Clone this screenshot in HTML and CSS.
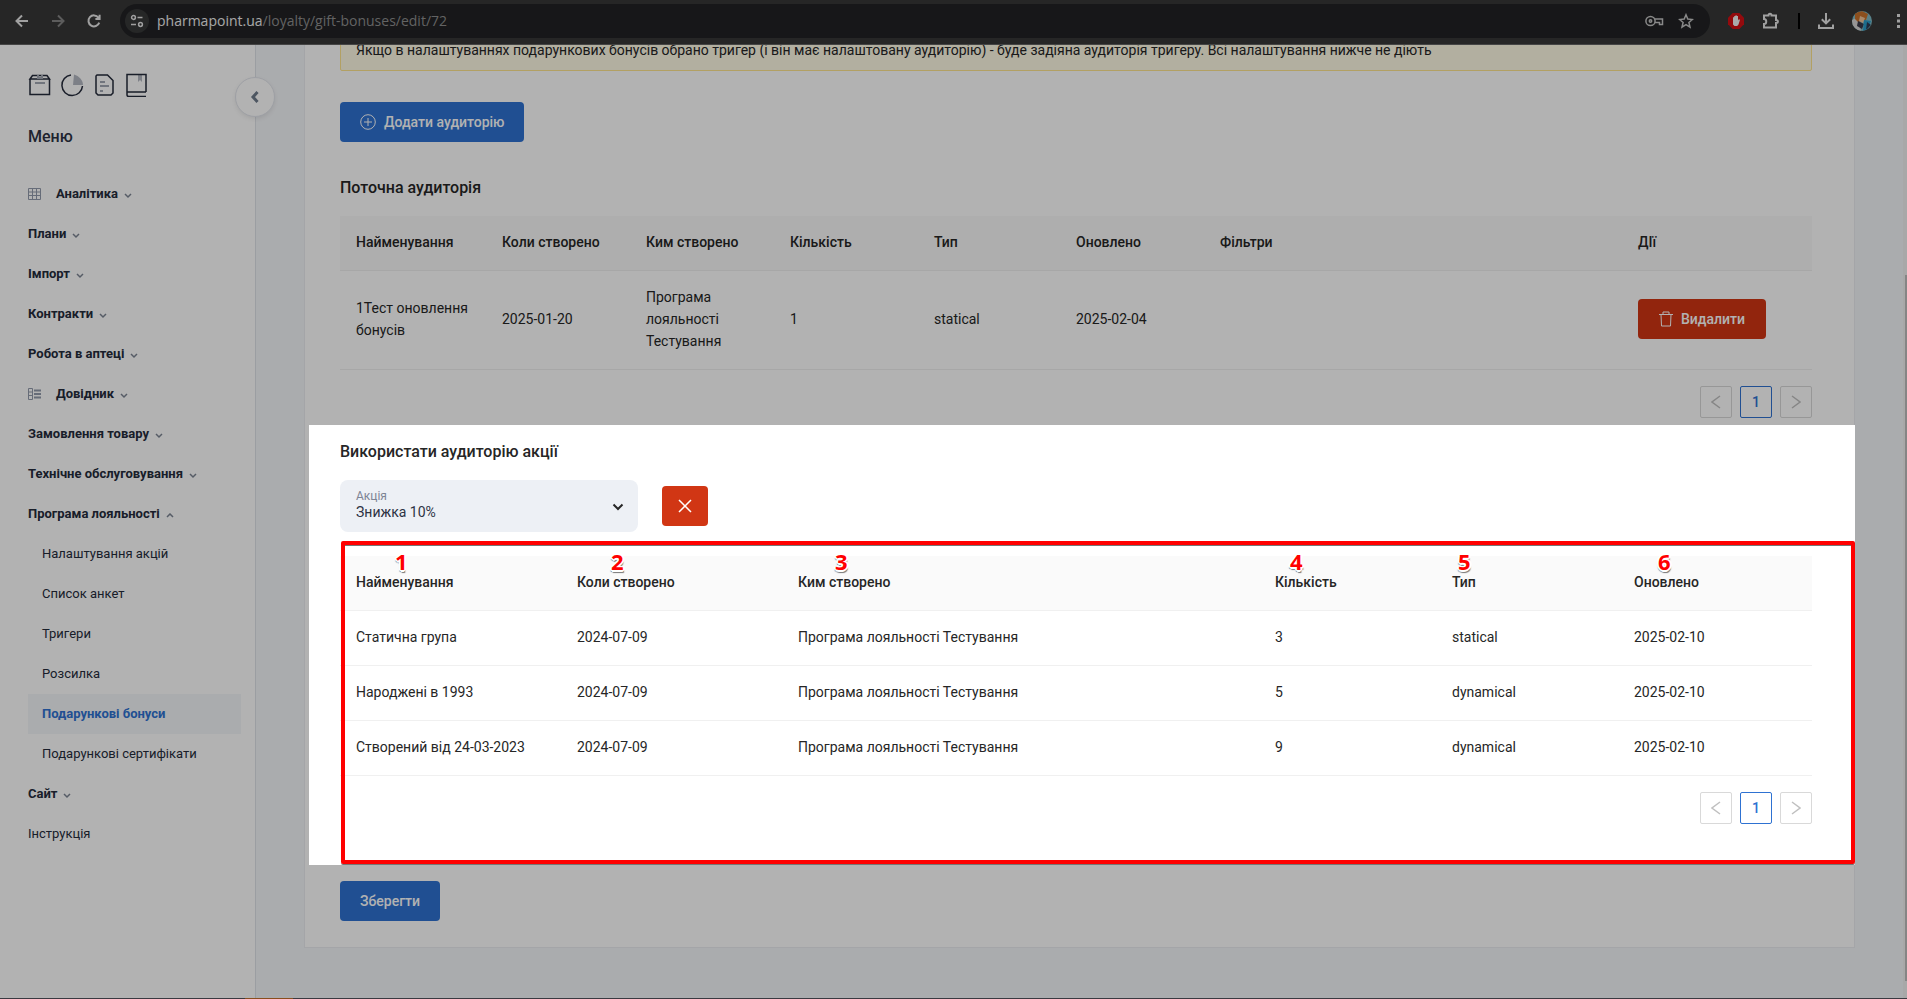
FILE: index.html
```html
<!DOCTYPE html>
<html lang="uk">
<head>
    <meta charset="UTF-8">
    <meta name="viewport" content="width=device-width, initial-scale=1.0">
    <title>Подарункові бонуси</title>
    <link rel="stylesheet" href="styles.css">
</head>
<body>
    <header class="browser-bar">
        <button class="bar-btn" aria-label="Назад">
            <svg width="16" height="16" viewBox="0 0 16 16"><path d="M14 8H3M8 2.5 2.5 8 8 13.5"/></svg>
        </button>
        <button class="bar-btn muted" aria-label="Вперед">
            <svg width="16" height="16" viewBox="0 0 16 16"><path d="M2 8h11M8 2.5 13.5 8 8 13.5"/></svg>
        </button>
        <button class="bar-btn" aria-label="Оновити">
            <svg width="16" height="16" viewBox="0 0 16 16"><path d="M13.2 9.6A5.5 5.5 0 1 1 12.4 4.6L13.6 6M13.6 1.8V6H9.4"/></svg>
        </button>
        <div class="address">
            <span class="site-info">
                <svg width="16" height="16" viewBox="0 0 16 16"><circle cx="4.5" cy="4.5" r="1.9"/><path d="M8.5 4.5h5M2 11.5h5"/><circle cx="11.5" cy="11.5" r="1.9"/></svg>
            </span>
            <span class="url"><b>pharmapoint.ua</b>/loyalty/gift-bonuses/edit/72</span>
            <button class="bar-btn" aria-label="Паролі">
                <svg width="20" height="16" viewBox="0 0 20 16"><circle cx="6.5" cy="8" r="4.6"/><circle cx="6.5" cy="8" r="1.2"/><path d="M11 6h7.5v5.5h-3V9.5H11"/></svg>
            </button>
            <button class="bar-btn" aria-label="Закладка">
                <svg width="16" height="16" viewBox="0 0 16 16"><path d="m8 1.8 1.8 4.3 4.6.4-3.5 3 1.1 4.6L8 11.6l-4 2.5 1.1-4.6-3.5-3 4.6-.4z"/></svg>
            </button>
        </div>
        <div class="extensions">
            <button class="bar-btn" aria-label="AdBlock">
                <svg width="16" height="16" viewBox="0 0 16 16"><path class="ad-red" d="M4.7 0h6.6L16 4.7v6.6L11.3 16H4.7L0 11.3V4.7z"/><path class="ad-hand" d="M5 8V4.200h1.200V3h1.300v-.700h1.200V3H10v4.500l.8-1.200 1.200.4-1.500 4.800L9.200 13H6.500L5 11.500z"/></svg>
            </button>
            <button class="bar-btn" aria-label="Розширення">
                <svg width="18" height="18" viewBox="0 0 18 18"><path d="M2 3.500h4.500C6.500 1 9.500 1 9.500 3.500H14V8c2.500 0 2.500 3 0 3v4.500H2V12c3 0 3-5 0-5z"/></svg>
            </button>
            <span class="bar-divider"></span>
            <button class="bar-btn" aria-label="Завантаження">
                <svg width="16" height="16" viewBox="0 0 16 16"><path d="M8 0v10M3.800 6.200 8 10.400l4.200-4.200M1 11.500V15h14v-3.500"/></svg>
            </button>
            <button class="bar-btn" aria-label="Профіль">
                <svg class="avatar" width="20" height="20" viewBox="0 0 20 20"><path fill="#7fb9c4" d="M0 0h20v20H0z"/><path fill="#d9d6d4" d="M0 9 6 6l3 14H0z"/><path fill="#c9722c" d="M3 2 10 0l6 3-2 6-8 2-3-3z"/><path fill="#f0c49a" d="m8 5 5 2-2 5-4-2z"/><path fill="#3c3a48" d="m6 10 6 3-2 5-5-3z"/><path fill="#2a9dc9" d="m12 9 7 1-3 8-5 2z"/><path fill="#2b3a52" d="m15 11 4 3-5 5z"/></svg>
            </button>
            <button class="bar-btn" aria-label="Меню браузера">
                <svg width="16" height="16" viewBox="0 0 16 16"><path class="dots" d="M7 1h3v3H7zM7 6.500h3v3H7zM7 12h3v3H7z"/></svg>
            </button>
        </div>
    </header>

    <div class="layout">
        <aside class="sidebar">
            <button class="collapse" aria-label="Згорнути меню">
                <svg width="12" height="12" viewBox="0 0 12 12"><path d="M8.500 1 4 6l4.500 5"/></svg>
            </button>
            <div class="shortcuts">
                <svg width="24" height="24" viewBox="0 0 24 24"><path d="M2 6v15.500h19.500V6M2 6l2.500-3.500H19L21.500 6z"/><path class="soft" d="M7 10h10M10 2v3h4V2"/></svg>
                <svg width="24" height="24" viewBox="0 0 24 24"><path class="soft-fill" d="M14 1.500 13 12h10C23 7 19 3 14 1.500z"/><path d="M11 2a10.300 10.300 0 1 0 11.500 11"/></svg>
                <svg width="24" height="24" viewBox="0 0 24 24"><path d="M5 2h10.500L21 7.500V20l-2 2H6l-2-2V3z"/><path class="soft" d="M8 9h5M8 13h9M8 18h3"/></svg>
                <svg width="24" height="24" viewBox="0 0 24 24"><path class="soft-fill" d="M14 2h4v7l-2-2-2 2z"/><path d="M22 19V1.500H3V22c0 1 1 1.500 2 1.500h17M3 19h19"/></svg>
            </div>
            <h2 class="menu-title">Меню</h2>
            <nav class="menu">
                <a class="menu-item" href="#">
                    <svg class="item-icon" width="13" height="12" viewBox="0 0 13 12"><path d="M.5.500h12v11H.500zM.500 4h12M.500 7.500h12M4.500.500v11M8.500.500v11"/></svg>
                    Аналітика <svg class="caret" width="8" height="6" viewBox="0 0 8 6"><path d="m1 1 3 3 3-3"/></svg>
                </a>
                <a class="menu-item" href="#">Плани <svg class="caret" width="8" height="6" viewBox="0 0 8 6"><path d="m1 1 3 3 3-3"/></svg></a>
                <a class="menu-item" href="#">Імпорт <svg class="caret" width="8" height="6" viewBox="0 0 8 6"><path d="m1 1 3 3 3-3"/></svg></a>
                <a class="menu-item" href="#">Контракти <svg class="caret" width="8" height="6" viewBox="0 0 8 6"><path d="m1 1 3 3 3-3"/></svg></a>
                <a class="menu-item" href="#">Робота в аптеці <svg class="caret" width="8" height="6" viewBox="0 0 8 6"><path d="m1 1 3 3 3-3"/></svg></a>
                <a class="menu-item" href="#">
                    <svg class="item-icon" width="13" height="12" viewBox="0 0 13 12"><path d="M.5.500h4v11h-4zM.500 4h4M.500 7.500h4"/><path stroke-width="2" d="M6 2.500h7M6 6h7M6 9.500h7"/></svg>
                    Довідник <svg class="caret" width="8" height="6" viewBox="0 0 8 6"><path d="m1 1 3 3 3-3"/></svg>
                </a>
                <a class="menu-item" href="#">Замовлення товару <svg class="caret" width="8" height="6" viewBox="0 0 8 6"><path d="m1 1 3 3 3-3"/></svg></a>
                <a class="menu-item" href="#">Технічне обслуговування <svg class="caret" width="8" height="6" viewBox="0 0 8 6"><path d="m1 1 3 3 3-3"/></svg></a>
                <a class="menu-item" href="#">Програма лояльності <svg class="caret" width="8" height="6" viewBox="0 0 8 6"><path d="m1 4 3-3 3 3"/></svg></a>
                <a class="menu-item sub" href="#">Налаштування акцій</a>
                <a class="menu-item sub" href="#">Список анкет</a>
                <a class="menu-item sub" href="#">Тригери</a>
                <a class="menu-item sub" href="#">Розсилка</a>
                <a class="menu-item sub active" href="#">Подарункові бонуси</a>
                <a class="menu-item sub" href="#">Подарункові сертифікати</a>
                <a class="menu-item" href="#">Сайт <svg class="caret" width="8" height="6" viewBox="0 0 8 6"><path d="m1 1 3 3 3-3"/></svg></a>
                <a class="menu-item plain" href="#">Інструкція</a>
            </nav>
        </aside>

        <main class="content">
            <div class="card">
                <div class="alert">Якщо в налаштуваннях подарункових бонусів обрано тригер (і він має налаштовану аудиторію) - буде задіяна аудиторія тригеру. Всі налаштування нижче не діють</div>

                <button class="btn btn-add">
                    <svg width="16" height="16" viewBox="0 0 16 16"><circle cx="8" cy="8" r="7.300"/><path d="M8 4v8M4 8h8"/></svg>
                    Додати аудиторію
                </button>

                <h3 class="section-title">Поточна аудиторія</h3>
                <table class="table">
                    <colgroup>
                        <col class="w-146"><col class="w-144"><col class="w-144"><col class="w-144"><col class="w-142"><col class="w-144"><col class="w-418"><col class="w-190">
                    </colgroup>
                    <thead>
                        <tr>
                            <th>Найменування</th>
                            <th>Коли створено</th>
                            <th>Ким створено</th>
                            <th>Кількість</th>
                            <th>Тип</th>
                            <th>Оновлено</th>
                            <th>Фільтри</th>
                            <th>ДІї</th>
                        </tr>
                    </thead>
                    <tbody>
                        <tr>
                            <td>1Тест оновлення бонусів</td>
                            <td>2025-01-20</td>
                            <td>Програма лояльності Тестування</td>
                            <td>1</td>
                            <td>statical</td>
                            <td>2025-02-04</td>
                            <td></td>
                            <td>
                                <button class="btn btn-danger">
                                    <svg width="14" height="16" viewBox="0 0 14 16"><path d="M0 3.500h14M4 3.500V1h6v2.500M2 3.500 2.500 15h9L12 3.500"/></svg>
                                    Видалити
                                </button>
                            </td>
                        </tr>
                    </tbody>
                </table>
                <div class="pagination">
                    <button class="page" aria-label="Попередня"><svg width="10" height="14" viewBox="0 0 10 14"><path d="M9 1 1 7l8 6"/></svg></button>
                    <button class="page current">1</button>
                    <button class="page" aria-label="Наступна"><svg width="10" height="14" viewBox="0 0 10 14"><path d="m1 1 8 6-8 6"/></svg></button>
                </div>

                <section class="spotlight">
                    <h3 class="section-title">Використати аудиторію акції</h3>
                    <div class="promo-row">
                        <div class="field">
                            <label for="promo">Акція</label>
                            <select id="promo">
                                <option>Знижка 10%</option>
                            </select>
                            <svg class="field-arrow" width="12" height="8" viewBox="0 0 12 8"><path d="m1.500 1.500 4.500 4.500 4.500-4.500"/></svg>
                        </div>
                        <button class="btn btn-clear" aria-label="Очистити">
                            <svg width="14" height="14" viewBox="0 0 14 14"><path d="m1 1 12 12M13 1 1 13"/></svg>
                        </button>
                    </div>
                    <table class="table">
                        <colgroup>
                            <col class="w-221"><col class="w-221"><col class="w-477"><col class="w-177"><col class="w-182"><col class="w-194">
                        </colgroup>
                        <thead>
                            <tr>
                                <th>Найменування</th>
                                <th>Коли створено</th>
                                <th>Ким створено</th>
                                <th>Кількість</th>
                                <th>Тип</th>
                                <th>Оновлено</th>
                            </tr>
                        </thead>
                        <tbody>
                            <tr>
                                <td>Статична група</td>
                                <td>2024-07-09</td>
                                <td>Програма лояльності Тестування</td>
                                <td>3</td>
                                <td>statical</td>
                                <td>2025-02-10</td>
                            </tr>
                            <tr>
                                <td>Народжені в 1993</td>
                                <td>2024-07-09</td>
                                <td>Програма лояльності Тестування</td>
                                <td>5</td>
                                <td>dynamical</td>
                                <td>2025-02-10</td>
                            </tr>
                            <tr>
                                <td>Створений від 24-03-2023</td>
                                <td>2024-07-09</td>
                                <td>Програма лояльності Тестування</td>
                                <td>9</td>
                                <td>dynamical</td>
                                <td>2025-02-10</td>
                            </tr>
                        </tbody>
                    </table>
                    <div class="pagination">
                        <button class="page" aria-label="Попередня"><svg width="10" height="14" viewBox="0 0 10 14"><path d="M9 1 1 7l8 6"/></svg></button>
                        <button class="page current">1</button>
                        <button class="page" aria-label="Наступна"><svg width="10" height="14" viewBox="0 0 10 14"><path d="m1 1 8 6-8 6"/></svg></button>
                    </div>
                    <!-- red frame with numbered pins -->
                    <div class="frame">
                        <span class="pin pin-1">1</span>
                        <span class="pin pin-2">2</span>
                        <span class="pin pin-3">3</span>
                        <span class="pin pin-4">4</span>
                        <span class="pin pin-5">5</span>
                        <span class="pin pin-6">6</span>
                    </div>
                </section>

                <button class="btn btn-save">Зберегти</button>
            </div>
        </main>
        <div class="scrollbar"><div class="thumb"></div></div>
    </div>
    <footer class="taskbar"><span class="task"></span></footer>
</body>
</html>
```

FILE: styles.css
```css
:root {
    --blue: #2e72d2;
    --red: #d13614;
    --text: #262626;
    --menu-text: #252b3b;
    --page-bg: #f4f6f9;
    --line: #f0f0f0;
}

* {
    box-sizing: border-box;
    margin: 0;
    padding: 0;
}

body {
    display: flex;
    flex-direction: column;
    height: 100vh;
    overflow: hidden;
    background-color: var(--page-bg);
    color: var(--text);
    font-family: Roboto, "Liberation Sans", sans-serif;
    font-size: 14px;
    line-height: 22px;
}

button,
select {
    font-family: inherit;
    font-size: inherit;
    border: none;
    background: none;
    cursor: pointer;
}

svg {
    flex: none;
    fill: none;
    stroke: currentColor;
}

/* Browser bar */
.browser-bar {
    position: relative;
    z-index: 2;
    flex: none;
    display: flex;
    align-items: center;
    height: 45px;
    padding: 0 1px 2px 14px;
    background-color: #373737;
    border-bottom: 1px solid #636363;
    color: #e6e6e6;
}

.bar-btn {
    display: flex;
    color: inherit;
    stroke-width: 2;
}

.browser-bar > .bar-btn {
    margin-right: 20px;
}

.browser-bar > .muted + .bar-btn {
    margin-right: 18px;
}

.bar-btn.muted {
    color: #858585;
}

.address {
    flex: 1;
    display: flex;
    align-items: center;
    gap: 14px;
    height: 34px;
    margin-right: 18px;
    padding: 0 16px 0 5px;
    background-color: #212224;
    border-radius: 17px;
    color: #c4c4c4;
}

.address .bar-btn {
    stroke-width: 1.5;
}

.site-info {
    display: flex;
    align-items: center;
    justify-content: center;
    width: 24px;
    height: 24px;
    margin-right: -6px;
    border-radius: 50%;
    background-color: #373839;
    color: #e6e6e6;
    stroke-width: 1.5;
}

.url {
    flex: 1;
    font-family: "Open Sans", "Noto Sans", sans-serif;
    font-size: 14px;
    color: #8e8e8e;
}

.url b {
    font-weight: 400;
    color: #f0f0f0;
}

.extensions {
    display: flex;
    align-items: center;
    gap: 18px;
}

.ad-red {
    fill: #d40f14;
    stroke: none;
}

.ad-hand {
    fill: #f4f4f4;
    stroke: none;
}

.bar-divider {
    width: 2px;
    height: 16px;
    background-color: #000;
}

.avatar {
    border-radius: 50%;
    stroke: none;
}

.dots {
    fill: currentColor;
    stroke: none;
}

/* Layout */
.layout {
    flex: 1;
    display: flex;
    min-height: 0;
}

.sidebar {
    position: relative;
    flex: none;
    width: 256px;
    padding: 28px 14px 0 28px;
    background-color: #fff;
    border-right: 1px solid #dfe2e8;
}

.collapse {
    position: absolute;
    top: 32px;
    right: -20px;
    display: flex;
    align-items: center;
    justify-content: center;
    width: 40px;
    height: 40px;
    border: 1px solid #e2e5ec;
    border-radius: 50%;
    background-color: #fff;
    box-shadow: 0 2px 4px rgba(0, 0, 0, 0.08);
    color: #6f7b8c;
    stroke-width: 3;
}

.shortcuts {
    display: flex;
    gap: 8px;
    color: #252b3b;
    stroke-width: 1.5;
}

.soft {
    stroke: #a3a8b3;
    stroke-width: 2;
}

.soft-fill {
    fill: #b4b8c2;
    stroke: none;
}

.menu-title {
    margin: 28px 0 25px;
    font-size: 16px;
    font-weight: 500;
    line-height: 24px;
    color: #2d3344;
}

.menu-item {
    display: flex;
    align-items: center;
    height: 40px;
    font-size: 13px;
    font-weight: 700;
    color: var(--menu-text);
    text-decoration: none;
}

.item-icon {
    margin-right: 15px;
    color: #939bac;
}

.caret {
    margin: 4px 0 0 6px;
    color: #7c8493;
    stroke-width: 1.5;
}

.menu-item.sub {
    padding-left: 14px;
    font-weight: 400;
}

.menu-item.plain {
    font-weight: 400;
}

.menu-item.active {
    background-color: var(--page-bg);
    color: var(--blue);
    font-weight: 700;
}

.content {
    flex: 1;
    padding: 0 48px 51px;
}

/* the page is scrolled, so the card runs on under the browser bar */
.card {
    margin-top: -45px;
    padding: 31px 42px 26px 35px;
    background-color: #fff;
    border: 1px solid #ebedf1;
    border-top: none;
}

.alert {
    padding: 7px 15px 9px;
    background-color: #fffbe6;
    border: 1px solid #ffe58f;
    border-radius: 2px;
}

.section-title {
    margin-bottom: 16px;
    font-size: 16px;
    font-weight: 500;
    line-height: 24px;
}

/* Buttons */
.btn {
    display: flex;
    align-items: center;
    justify-content: center;
    height: 40px;
    padding: 0 20px 1px;
    border-radius: 4px;
    color: #fff;
    font-weight: 500;
}

.btn-add {
    gap: 8px;
    margin: 31px 0 34px;
    background-color: var(--blue);
}

.btn-save {
    margin-top: 16px;
    background-color: var(--blue);
}

.btn-danger {
    gap: 8px;
    background-color: var(--red);
}

.btn-clear {
    padding: 0 16px;
    background-color: var(--red);
    stroke-width: 1.5;
}

/* Tables */
.table {
    width: 100%;
    table-layout: fixed;
    border-collapse: separate;
    border-spacing: 0;
}

.table th,
.table td {
    padding: 15px 16px 17px;
    border-bottom: 1px solid var(--line);
    text-align: left;
    vertical-align: middle;
}

.table th {
    background-color: #fafafa;
    font-weight: 500;
}

.table .btn {
    padding: 0 21px 1px;
}

.w-142 { width: 142px; }
.w-144 { width: 144px; }
.w-146 { width: 146px; }
.w-177 { width: 177px; }
.w-182 { width: 182px; }
.w-190 { width: 190px; }
.w-194 { width: 194px; }
.w-221 { width: 221px; }
.w-418 { width: 418px; }
.w-477 { width: 477px; }

.pagination {
    display: flex;
    justify-content: flex-end;
    gap: 8px;
    margin-top: 16px;
}

.page {
    display: flex;
    align-items: center;
    justify-content: center;
    width: 32px;
    height: 32px;
    border: 1px solid #d9d9d9;
    border-radius: 2px;
    color: #c0c0c0;
    stroke-width: 1.5;
}

.page.current {
    border-color: var(--blue);
    color: var(--blue);
    font-weight: 500;
}

/* Highlighted block, its shadow dims the rest of the window */
.spotlight {
    position: relative;
    z-index: 5;
    margin: 7px -43px 0 -31px;
    padding: 15px 43px 41px 31px;
    background-color: #fff;
    box-shadow: 0 0 0 3000px rgba(0, 0, 0, 0.3);
}

.promo-row {
    display: flex;
    align-items: center;
    gap: 24px;
    margin-bottom: 24px;
}

.field {
    position: relative;
    display: flex;
    flex-direction: column;
    width: 298px;
    padding: 8px 16px 12px;
    background-color: #edf0f5;
    border-radius: 8px;
}

.field label {
    font-size: 12px;
    line-height: 16px;
    color: #7d8494;
}

.field select {
    height: 16px;
    appearance: none;
    color: #2d3344;
    line-height: 16px;
}

.field-arrow {
    position: absolute;
    top: 23px;
    right: 14px;
    stroke-width: 2;
    pointer-events: none;
}

.frame {
    position: absolute;
    top: 116px;
    right: 0;
    bottom: 1px;
    left: 32px;
    border: 4px solid #f00;
    border-radius: 2px;
    box-shadow: 0 1px 0 #777, inset 0 1px 0 #777;
    pointer-events: none;
}

.pin {
    position: absolute;
    top: 5px;
    color: #f00;
    font-family: "Open Sans", sans-serif;
    font-size: 22px;
    font-weight: 700;
    text-shadow: -1px -1px 0 #fff, 1px -1px 0 #fff, -1px 1px 0 #fff, 1px 1px 0 #fff,
        -2px 0 0 #fff, 2px 0 0 #fff, 0 2px 0 #fff, -1px 2px 1px #777, 1px 3px 1px #777;
}

.pin-1 { left: 50px; }
.pin-2 { left: 266px; }
.pin-3 { left: 490px; }
.pin-4 { left: 945px; }
.pin-5 { left: 1113px; }
.pin-6 { left: 1313px; }

/* Page scrollbar and the edge of the taskbar */
.scrollbar {
    flex: none;
    width: 4px;
    padding: 230px 0 17px 2px;
    background-color: #f1f1f1;
}

.thumb {
    height: 100%;
    background-color: #bfbfbf;
}

.taskbar {
    flex: none;
    display: flex;
    height: 1px;
    padding-left: 245px;
    background-color: #54545e;
}

.task {
    width: 48px;
    background-color: #c4702c;
}
```
